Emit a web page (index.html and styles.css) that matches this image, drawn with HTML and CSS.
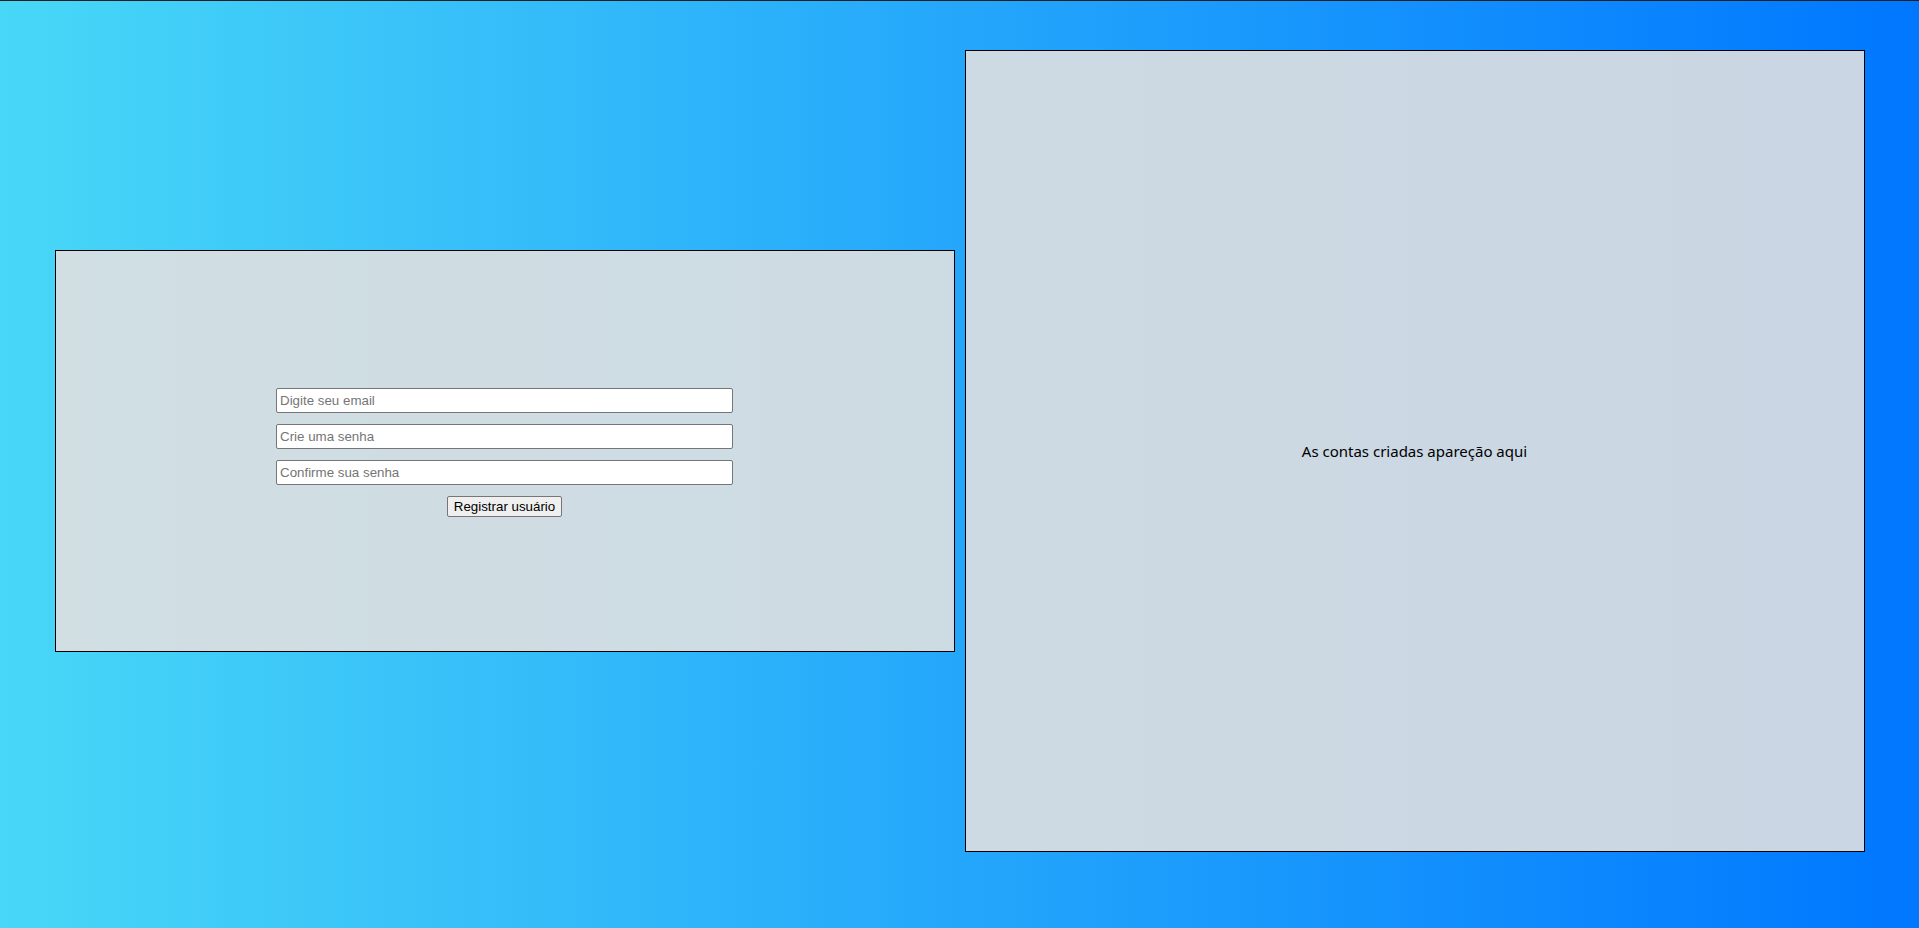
FILE: index.html
```html
<!DOCTYPE html>
<html lang="pt-BR">
<head>
<meta charset="UTF-8">
<title>Registro</title>
<link rel="stylesheet" href="styles.css">
</head>
<body>
<main class="page">
  <section class="panel panel-form">
    <form class="form" onsubmit="return false;">
      <input class="field" type="email" placeholder="Digite seu email">
      <input class="field" type="password" placeholder="Crie uma senha">
      <input class="field" type="password" placeholder="Confirme sua senha">
      <button class="btn" type="submit">Registrar usuário</button>
    </form>
  </section>
  <section class="panel panel-list">
    <p class="empty">As contas criadas apareção aqui</p>
  </section>
</main>
</body>
</html>
```
FILE: styles.css
```css
html {
  height: 100%;
  background: linear-gradient(to right, #48d7f7, #0077ff);
}
body {
  margin: 0;
  border-top: 1px solid #1e1e1e;
}
.page {
  display: flex;
  justify-content: center;
  align-items: center;
  gap: 10px;
  padding: 49px 0 50px;
}
.panel {
  box-sizing: border-box;
  width: 900px;
  border: 1px solid #000;
  background: rgba(224, 224, 224, 0.9);
  display: flex;
  align-items: center;
  justify-content: center;
}
.panel-form {
  height: 402px;
}
.panel-list {
  height: 802px;
}
.form {
  display: flex;
  flex-direction: column;
  align-items: center;
  gap: 11px;
  margin-top: 2px;
}
.field {
  box-sizing: border-box;
  width: 457px;
  height: 25px;
  margin: 0;
  padding: 1px 3px;
  border: 1px solid #767676;
  border-radius: 2px;
  background: #fff;
  font-family: "Liberation Sans", Arial, sans-serif;
  font-size: 13.333px;
  color: #000;
}
.field::placeholder {
  color: #757575;
}
.btn {
  box-sizing: border-box;
  height: 21px;
  margin: 0;
  padding: 1px 6px;
  border: 1px solid #767676;
  border-radius: 2px;
  background: #efefef;
  font-family: "Liberation Sans", Arial, sans-serif;
  font-size: 13.333px;
  color: #000;
}
.empty {
  margin: 0;
  font-family: "Noto Sans", sans-serif;
  font-size: 15px;
  color: #000;
}
```
